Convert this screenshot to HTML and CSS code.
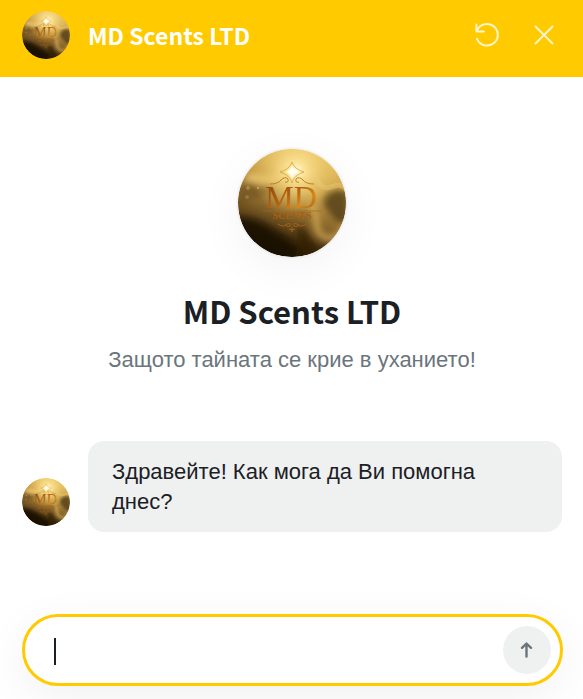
FILE: index.html
```html
<!DOCTYPE html>
<html lang="bg">
<head>
    <meta charset="UTF-8">
    <meta name="viewport" content="width=device-width, initial-scale=1">
    <title>MD Scents LTD</title>
    <link rel="stylesheet" href="styles.css">
</head>
<body>
    <!-- Shared logo artwork -->
    <svg class="sprite" aria-hidden="true">
        <defs>
            <linearGradient id="base" x1="0.7" y1="0" x2="0.35" y2="1">
                <stop offset="0" stop-color="#e9c464"/>
                <stop offset="0.35" stop-color="#c49c45"/>
                <stop offset="0.6" stop-color="#8a672b"/>
                <stop offset="0.8" stop-color="#46310f"/>
                <stop offset="1" stop-color="#1a1104"/>
            </linearGradient>
            <radialGradient id="glow">
                <stop offset="0" stop-color="#fffbe0"/>
                <stop offset="0.2" stop-color="#ffe79a" stop-opacity="0.9"/>
                <stop offset="1" stop-color="#f2c75c" stop-opacity="0"/>
            </radialGradient>
            <linearGradient id="letters" x1="0" y1="0" x2="1" y2="1">
                <stop offset="0" stop-color="#8a450a"/>
                <stop offset="0.45" stop-color="#b0600d"/>
                <stop offset="0.7" stop-color="#d8881a"/>
                <stop offset="1" stop-color="#964e0c"/>
            </linearGradient>
            <filter id="soft" x="-30%" y="-30%" width="160%" height="160%">
                <feGaussianBlur stdDeviation="3"/>
            </filter>
            <clipPath id="round"><circle cx="54" cy="54" r="54"/></clipPath>
        </defs>
        <symbol id="logo" viewBox="0 0 108 108">
            <g clip-path="url(#round)">
                <rect width="108" height="108" fill="url(#base)"/>
                <g filter="url(#soft)">
                    <path d="M0 38C12 28 18 42 32 34L36 42C26 52 12 46 0 60Z" fill="#6a4d1f" opacity="0.6"/>
                    <path d="M86 56C82 42 94 40 110 42V74C98 78 94 66 86 56Z" fill="#54401a" opacity="0.85"/>
                    <path d="M-4 70C14 66 26 74 40 84C54 92 62 98 66 112H-4Z" fill="#140c02" opacity="0.85"/>
                    <path d="M60 76C70 80 74 94 84 108H58Z" fill="#2c1e08" opacity="0.7"/>
                    <path d="M72 56C84 66 72 80 86 88C96 92 104 86 108 76" fill="none" stroke="#d6ae5a" stroke-width="7" opacity="0.75"/>
                    <path d="M8 26C22 20 28 34 46 24C40 38 20 34 8 32" fill="#edcb77" opacity="0.8"/>
                </g>
                <circle cx="58" cy="22" r="46" fill="url(#glow)"/>
                <path d="M78 30C90 50 96 28 108 40" fill="none" stroke="#efce80" stroke-width="5" opacity="0.4"/>
                <circle cx="10" cy="39" r="2" fill="#e2b75b" opacity="0.4"/>
                <circle cx="20" cy="39" r="1" fill="#ffe091" opacity="0.5"/>
                <circle cx="9" cy="48" r="2" fill="#e2b75b" opacity="0.3"/>
                <path d="M54 16Q55 21 60 23Q55 25 54 30Q53 25 48 23Q53 21 54 16Z" fill="#fffdf0"/>
                <path d="M54 13Q56 20 66 23Q56 26 54 34Q52 26 42 23Q52 20 54 13Z" fill="none" stroke="#d5a23c" stroke-width="0.8"/>
                <path d="M32 35Q40 35 43 31Q47 27 50 30Q51 34 47 33M76 35Q68 35 65 31Q61 27 58 30Q57 34 61 33" fill="none" stroke="#bb8124" stroke-width="1"/>
                <text class="logo-name" x="53" y="59" text-anchor="middle" fill="url(#letters)">MD</text>
                <path d="M25 62H84" stroke="#a16a23" stroke-width="0.7"/>
                <text class="logo-word" x="54" y="70" text-anchor="middle" fill="#a55f12">SCENTS</text>
                <path d="M40 75Q45 79 49 75Q53 73 52 77Q48 79 48 75M68 75Q63 79 59 75Q55 73 56 77Q60 79 60 75M54 78V83M51 80Q54 82 57 80" fill="none" stroke="#a5621a" stroke-width="1"/>
            </g>
        </symbol>
    </svg>

    <div class="chat">
        <header class="chat-header">
            <svg class="avatar" aria-hidden="true"><use href="#logo"/></svg>
            <h2>MD Scents LTD</h2>
            <div class="header-actions">
                <button type="button" aria-label="Започни отначало">
                    <svg width="30" height="30" viewBox="0 0 30 30">
                        <path d="M4.4 4.5v6.9h7.4M4.9 10.9A10.8 10.8 0 1 1 5 18.9"/>
                    </svg>
                </button>
                <button type="button" aria-label="Затвори">
                    <svg width="30" height="30" viewBox="0 0 30 30">
                        <path d="M6.5 6.5l17 17M23.5 6.5l-17 17"/>
                    </svg>
                </button>
            </div>
        </header>

        <main class="chat-body">
            <section class="intro">
                <svg class="avatar-large" aria-hidden="true"><use href="#logo"/></svg>
                <h1>MD Scents LTD</h1>
                <p>Защото тайната се крие в уханието!</p>
            </section>

            <div class="message">
                <svg class="avatar" aria-hidden="true"><use href="#logo"/></svg>
                <p class="bubble">Здравейте! Как мога да Ви помогна днес?</p>
            </div>
        </main>

        <form class="composer">
            <input type="text" name="message" aria-label="Съобщение" autocomplete="off">
            <button type="button" aria-label="Изпрати">
                <svg width="18" height="18" viewBox="0 0 18 18">
                    <path d="M8.5 15.5V3M4 6.8L8.5 2.5L13 6.8"/>
                </svg>
            </button>
        </form>
    </div>
</body>
</html>
```

FILE: styles.css
```css
* {
    box-sizing: border-box;
}

body, h1, h2, p {
    margin: 0;
}

body {
    background-color: #fff;
    color: #1b2025;
    font-family: "Liberation Sans", Arial, sans-serif;
    font-size: 22px;
    line-height: 30px;
}

h1, h2 {
    font-family: "Noto Sans CJK JP", sans-serif;
    font-weight: 700;
}

button {
    display: flex;
    align-items: center;
    justify-content: center;
    padding: 0;
    border: none;
    background: none;
    cursor: pointer;
}

.sprite {
    position: absolute;
    width: 0;
    height: 0;
}

.logo-name {
    font-family: "Liberation Serif", serif;
    font-size: 32px;
}

.logo-word {
    font-family: "Liberation Serif", serif;
    font-size: 10px;
    font-weight: 700;
}

.chat {
    display: flex;
    flex-direction: column;
    min-height: 100vh;
    overflow: hidden;
}

.chat-header {
    display: flex;
    align-items: center;
    gap: 18px;
    padding: 11px 24px 18px 22px;
    background-color: #ffca00;
    color: #fff;
}

.chat-header h2 {
    flex: 1;
    font-size: 23px;
    line-height: 32px;
}

.header-actions {
    display: flex;
    gap: 27px;
}

.header-actions path {
    fill: none;
    stroke: #fff4cc;
    stroke-width: 2;
    stroke-linecap: round;
    stroke-linejoin: round;
}

.avatar {
    flex: none;
    width: 48px;
    height: 48px;
    border-radius: 50%;
}

.chat-body {
    flex: 1;
    padding: 72px 21px 24px 22px;
}

.intro {
    display: flex;
    flex-direction: column;
    align-items: center;
    text-align: center;
}

.avatar-large {
    width: 108px;
    height: 108px;
    border-radius: 50%;
    box-shadow: 0 0 3px rgba(0, 0, 0, 0.15), 0 12px 48px rgba(0, 0, 0, 0.05);
}

.intro h1 {
    margin-top: 32px;
    font-size: 31px;
    line-height: 44px;
}

.intro p {
    margin-top: 12px;
    color: #6b757c;
}

.message {
    display: flex;
    align-items: flex-end;
    gap: 18px;
    margin-top: 66px;
}

.message .avatar {
    margin-bottom: 6px;
}

.bubble {
    flex: 1;
    padding: 16px 24px 15px;
    border-radius: 16px;
    background-color: #eff1f1;
}

.composer {
    position: relative;
    display: flex;
    align-items: center;
    margin: 0 20px 13px 22px;
    padding: 9px;
    border: 3px solid #ffca00;
    border-radius: 36px;
    background-color: #fff;
    box-shadow: 0 12px 48px rgba(0, 0, 0, 0.06);
}

/* text cursor */
.composer::before {
    content: "";
    position: absolute;
    top: 21px;
    left: 29px;
    width: 2px;
    height: 27px;
    background-color: #1b2025;
}

.composer input {
    flex: 1;
    min-width: 0;
    height: 48px;
    padding: 0 20px;
    border: none;
    outline: none;
    background: none;
    font: inherit;
    color: inherit;
    caret-color: transparent;
}

.composer button {
    width: 48px;
    height: 48px;
    border-radius: 50%;
    background-color: #eff1f1;
}

.composer button path {
    fill: none;
    stroke: #6b757c;
    stroke-width: 2.4;
    stroke-linecap: round;
    stroke-linejoin: round;
}
```
